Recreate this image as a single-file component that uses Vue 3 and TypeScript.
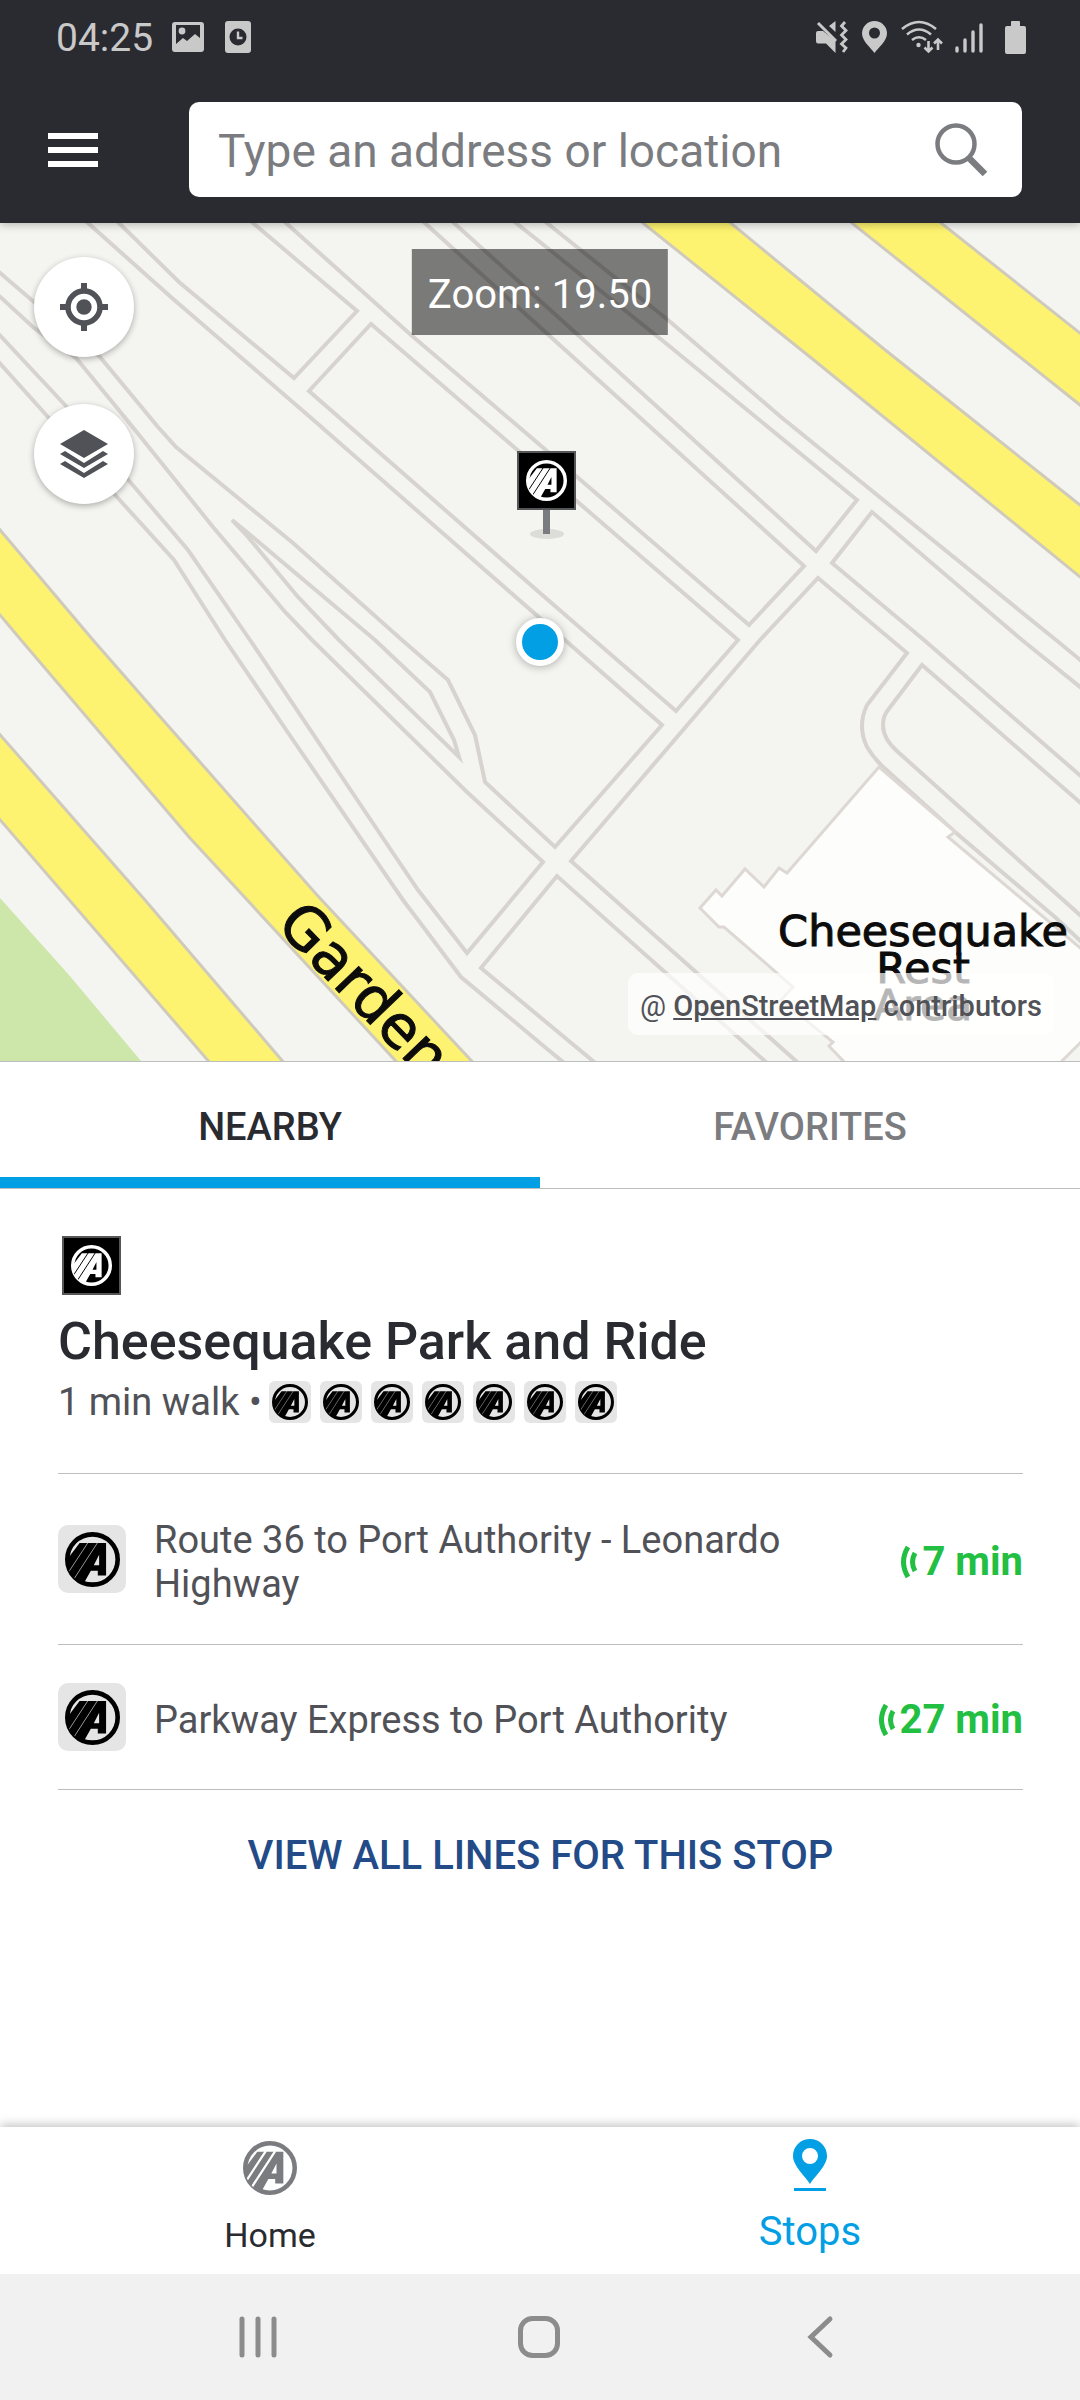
<script setup lang="ts">
import { ref } from 'vue'

interface Departure {
  line: string
  wait: string
}

const query = ref<string>('')
const activeTab = ref<'nearby' | 'favorites'>('nearby')
const zoomLevel = 19.5
const lineCount = 7

const departures: Departure[] = [
  { line: 'Route 36 to Port Authority - Leonardo Highway', wait: '7 min' },
  { line: 'Parkway Express to Port Authority', wait: '27 min' },
]

// Land parcels between the car park lanes, in map units.
const parcels: string[] = [
  '-8,215 78,215 88,223 172,298 310,417 662,725 555,847 485,782 475,735 448,680 402,640 293,543 176,447 158,427 100,357 34,302 -8,266',
  '110,215 119,223 179,282 294,378 357,311 253,223 244,215',
  '371,324 738,640 676,711 540,593 309,391',
  '277,215 286,223 411,335 540,445 749,625 804,566 416,215',
  '445,215 454,223 578,335 816,551 857,500 668,345 540,242 506,215',
  '872,512 832,563 924,640 1090,784 1090,695 1022,640',
  '537,215 547,223 668,320 781,417 1056,640 1090,668 1090,215',
  '557,876 481,968 605,1071 776,1071',
  '-5,292 34,328 76,358 127,420 213,527 286,613 312,640 468,793 543,862 467,953 418,890 362,807 250,640 188,550 131,483 65,405 -5,330',
  '-5,358 48,417 117,497 174,560 225,640 293,740 403,900 461,977 540,1043 574,1071 -5,1071',
  '232,520 248,533 375,640 430,692 454,740 459,757 339,640 298,597 248,537',
]
</script>

<template>
  <div class="app">
    <svg class="defs" aria-hidden="true">
      <symbol id="logo" viewBox="-83 -83 166 166">
        <clipPath id="logo-clip"><circle r="78" /></clipPath>
        <circle r="76" fill="none" stroke="currentColor" stroke-width="14" />
        <g clip-path="url(#logo-clip)">
          <path
            fill="currentColor"
            fill-rule="evenodd"
            d="M-39-50H41V48H16V34H-5L-32 82H-90V18ZM20-14L4 17H20Z"
          />
          <path class="logo-gap" fill="none" d="M-13-52L-76 44M16-52L-58 62" />
        </g>
      </symbol>
    </svg>

    <header class="top">
      <div class="status">
        <div class="status-side">
          <time>04:25</time>
          <svg width="32" height="32" viewBox="0 0 32 32" fill="currentColor">
            <path
              fill-rule="evenodd"
              d="M3 1H29Q32 1 32 4V28Q32 31 29 31H3Q0 31 0 28V4Q0 1 3 1ZM4 4V23L11 17L15 20L23 13L28 17V4Z"
            />
            <circle cx="10" cy="10" r="3.4" />
          </svg>
          <svg class="alarm" width="26" height="32" viewBox="0 0 26 32">
            <rect width="26" height="32" rx="3" fill="currentColor" />
            <circle cx="13" cy="16" r="8.5" fill="#2a2b30" />
            <path d="M13 10.500V17H17.500" fill="none" stroke="currentColor" stroke-width="2.400" />
          </svg>
        </div>
        <div class="status-side signals">
          <svg width="32" height="32" viewBox="0 0 32 32" fill="currentColor">
            <path d="M2 10H7L19.500 20V32L10 22.500H2Q0 22.500 0 20V12Q0 10 2 10ZM13 5L19.500 0V11Z" />
            <path d="M2 2L20 20" stroke="currentColor" stroke-width="3" />
            <path
              d="M29 1L25.500 5L30 9.500L25.500 14L30 18.500L25.500 23L30 27L27 31"
              fill="none"
              stroke="currentColor"
              stroke-width="2.800"
            />
          </svg>
          <svg width="25" height="32" viewBox="0 0 25 32" fill="currentColor">
            <path
              fill-rule="evenodd"
              d="M12.500 0C19.500 0 25 5.500 25 12.500C25 20 16 27 12.500 32C9 27 0 20 0 12.500C0 5.500 5.500 0 12.500 0ZM12.500 6.500A5.500 5.500 0 1 0 12.500 17.500A5.500 5.500 0 1 0 12.500 6.500Z"
            />
          </svg>
          <svg width="40" height="32" viewBox="0 0 40 32" fill="none" stroke="currentColor" stroke-width="2.600">
            <path d="M1 8Q18-6 35 8M6 13.500Q18 3.500 30 13.500M11 19Q18 13.500 25 19" />
            <circle cx="17.500" cy="24" r="2.200" fill="currentColor" stroke="none" />
            <path d="M27.500 20V30M23.500 26.500L27.500 30.500L31.500 26.500M37 29V19M33 22.500L37 18.500L41 22.500" />
          </svg>
          <svg width="28" height="32" viewBox="0 0 28 32" stroke="currentColor" stroke-width="3.400" stroke-linecap="round">
            <path d="M2 27V30M10 19V30M18 11V30M26 4V30" />
          </svg>
          <svg class="battery" width="21" height="33" viewBox="0 0 21 33" fill="currentColor">
            <path d="M7 0H14Q15 0 15 1V5H19Q21 5 21 7V31Q21 33 19 33H2Q0 33 0 31V7Q0 5 2 5H6V1Q6 0 7 0Z" />
          </svg>
        </div>
      </div>
      <div class="appbar">
        <button class="menu" type="button" aria-label="Menu">
          <svg width="50" height="34" viewBox="0 0 50 34" fill="#fff">
            <path d="M0 0H50V6H0ZM0 14H50V20H0ZM0 28H50V34H0Z" />
          </svg>
        </button>
        <label class="search">
          <input v-model="query" type="text" placeholder="Type an address or location" aria-label="Search" />
          <svg width="54" height="54" viewBox="0 0 54 54" fill="none" stroke="#7b7c80">
            <circle cx="21" cy="21" r="18.500" stroke-width="4.500" />
            <path d="M34 35L50 51" stroke-width="6.500" />
          </svg>
        </label>
      </div>
    </header>

    <section class="map" aria-label="Map">
      <svg class="map-canvas" viewBox="0 223 1080 838" preserveAspectRatio="xMidYMid slice">
        <rect y="223" width="1080" height="838" fill="#f4f5f0" />
        <g fill="none" stroke="#d7d3cf" stroke-width="4">
          <polygon v-for="shape in parcels" :key="shape" :points="shape" />
          <path
            d="M808 1071L796 1061L571 861L760 640L818 578L907 653L867 705Q857 726 867 747Q873 757 881 765L955 832L1056 918L1090 950"
          />
          <path d="M1090 924L898 752Q883 739 883 725Q883 716 888 710L922 665L1090 811" />
        </g>
        <polygon
          points="879,767 787,873 779,868 764,887 745,869 722,896 716,890 700,908 719,927 724,927 793,987 781,1000 833,1042 829,1046 848,1066 1057,1066 1085,1038 1085,952 948,837 955,832"
          fill="#fdfdfb"
          stroke="#ddd8d3"
          stroke-width="3"
        />
        <g fill="#fef370" stroke="#cfcabb" stroke-width="3">
          <polygon points="633,215 643,223 815,361 1090,585 1090,513 884,349 721,215" />
          <polygon points="842,215 852,223 1090,413 1090,341 931,215" />
          <polygon points="-5,524 93,640 163,720 317,895 481,1071 405,1071 189,837 21,640 -5,609" />
          <polygon points="-5,729 145,900 291,1071 217,1071 -5,814" />
        </g>
        <polygon points="0,898 69,975 141,1061 0,1061" fill="#cde7ab" />
        <g class="map-label">
          <text transform="translate(275 926) rotate(46)" font-size="59">Garden</text>
          <g text-anchor="middle" font-size="43">
            <text x="923" y="946">Cheesequake</text>
            <text x="923" y="983">Rest</text>
            <text x="923" y="1020">Area</text>
          </g>
        </g>
        <ellipse cx="547" cy="534" rx="17" ry="5" fill="#dcdcd8" />
        <rect x="543" y="508" width="7" height="26" fill="#7b7c80" />
        <rect x="518" y="452" width="57" height="57" fill="#000" stroke="#555658" stroke-width="2" />
        <use class="logo-white" href="#logo" x="526" y="460" width="41" height="41" />
        <circle cx="540" cy="642" r="21" class="me" />
      </svg>

      <div class="map-buttons">
        <button type="button" aria-label="My location">
          <svg width="48" height="48" viewBox="-24 -24 48 48" fill="#515257">
            <circle r="7.700" />
            <circle r="16" fill="none" stroke="#515257" stroke-width="5.500" />
            <path d="M-3-24H3V-17H-3ZM-3 17H3V24H-3ZM-24-3H-17V3H-24ZM17-3H24V3H17Z" />
          </svg>
        </button>
        <button type="button" aria-label="Layers">
          <svg width="48" height="48" viewBox="-24 -24 48 48" fill="#515257">
            <path d="M0-24L24-10L0 4L-24-10ZM-24 0L-19-3L0 9L19-3L24 0L0 14ZM-24 10L-19 7L0 19L19 7L24 10L0 24Z" />
          </svg>
        </button>
      </div>
      <output class="zoom">Zoom: {{ zoomLevel.toFixed(2) }}</output>
      <p class="credit"><span>@</span> <a href="#osm">OpenStreetMap</a> contributors</p>
    </section>

    <div class="tabs" role="tablist">
      <button
        type="button"
        role="tab"
        :aria-selected="activeTab === 'nearby'"
        :class="{ active: activeTab === 'nearby' }"
        @click="activeTab = 'nearby'"
      >
        NEARBY
      </button>
      <button
        type="button"
        role="tab"
        :aria-selected="activeTab === 'favorites'"
        :class="{ active: activeTab === 'favorites' }"
        @click="activeTab = 'favorites'"
      >
        FAVORITES
      </button>
    </div>

    <main class="stop">
      <svg class="sign" width="59" height="59" viewBox="0 0 59 59">
        <rect x="1" y="1" width="57" height="57" fill="#000" stroke="#555658" stroke-width="2" />
        <use class="logo-white" href="#logo" x="9" y="9" width="41" height="41" />
      </svg>
      <h1>Cheesequake Park and Ride</h1>
      <div class="walk">
        <span>1 min walk •</span>
        <span class="chips">
          <span v-for="n in lineCount" :key="n" class="chip"><svg><use href="#logo" /></svg></span>
        </span>
      </div>

      <ul>
        <li v-for="item in departures" :key="item.line">
          <span class="badge"><svg><use href="#logo" /></svg></span>
          <span class="line">{{ item.line }}</span>
          <span class="wait">
            <svg width="16" height="32" viewBox="0 0 16 32" fill="none" stroke="currentColor" stroke-width="5">
              <path d="M7 1Q-2 16 7 31M14 7Q9 16 14 25" />
            </svg>
            {{ item.wait }}
          </span>
        </li>
      </ul>
      <button class="all" type="button">VIEW ALL LINES FOR THIS STOP</button>
    </main>

    <nav class="bottom">
      <a class="home" href="#home">
        <svg width="54" height="54" viewBox="0 0 54 54"><use href="#logo" width="54" height="54" /></svg>
        <span>Home</span>
      </a>
      <a class="stops" href="#stops">
        <svg width="54" height="54" viewBox="0 0 54 54" fill="currentColor">
          <path
            fill-rule="evenodd"
            d="M27-2C36.500-2 44 5.500 44 15C44 25 31 36 27 43C23 36 10 25 10 15C10 5.500 17.500-2 27-2ZM27 7A8 8 0 1 0 27 23A8 8 0 1 0 27 7Z"
          />
          <path d="M11 47H43V50H11Z" />
        </svg>
        <span>Stops</span>
      </a>
    </nav>

    <div class="system">
      <button type="button" aria-label="Recent apps">
        <svg width="42" height="42" viewBox="0 0 42 42"><path d="M5 3V39M21 3V39M37 3V39" /></svg>
      </button>
      <button type="button" aria-label="Home screen">
        <svg width="42" height="42" viewBox="0 0 42 42"><rect x="2.500" y="2.500" width="37" height="37" rx="12" /></svg>
      </button>
      <button type="button" aria-label="Back">
        <svg width="42" height="42" viewBox="0 0 42 42"><path d="M31 3L12 21L31 39" /></svg>
      </button>
    </div>
  </div>
</template>

<style>
body {
  background: #fff;
}
</style>

<style scoped>
.app {
  display: flex;
  flex-direction: column;
  min-height: 100vh;
  font-family: Roboto, 'Liberation Sans', sans-serif;
  color: #2a2b30;
}
.app svg {
  display: block;
  flex: none;
  overflow: visible;
}
.app .defs {
  position: absolute;
  width: 0;
  height: 0;
}
button {
  border: 0;
  padding: 0;
  background: none;
  font: inherit;
  color: inherit;
}
.logo-gap {
  stroke: var(--gap, #e5e5e5);
  stroke-width: var(--gap-width, 2);
}
.logo-white {
  color: #fff;
  --gap: #000;
  --gap-width: 4;
}

.top {
  position: relative;
  z-index: 1;
  background: #2a2b30;
  box-shadow: 0 2px 8px rgba(0, 0, 0, 0.25);
}
.status {
  display: flex;
  justify-content: space-between;
  align-items: center;
  height: 76px;
  padding: 0 54px 2px 56px;
  box-sizing: border-box;
  color: #c9c9c9;
}
.status-side {
  display: flex;
  align-items: center;
  gap: 19px;
  font-size: 39px;
}
.status time {
  padding-top: 2px;
}
.signals {
  gap: 14px;
}
.alarm {
  margin-left: 2px;
}
.battery {
  margin-left: 8px;
}
.appbar {
  display: flex;
  align-items: center;
  gap: 91px;
  height: 147px;
  padding: 0 58px 0 48px;
}
.search {
  display: flex;
  flex: 1;
  align-items: center;
  height: 95px;
  padding: 0 33px 0 29px;
  box-sizing: border-box;
  border-radius: 10px;
  background: #fff;
}
.search input {
  flex: 1;
  min-width: 0;
  border: 0;
  padding: 2px 0 0;
  outline: 0;
  background: none;
  font: inherit;
  font-size: 46px;
  color: #2a2b30;
}
.search input::placeholder {
  color: #7b7c80;
  opacity: 1;
}

.map {
  position: relative;
  aspect-ratio: 1080 / 838;
  border-bottom: 1px solid #bdbebf;
}
.app .map-canvas {
  width: 100%;
  height: 100%;
  overflow: hidden;
}
.map-label {
  font-family: 'DejaVu Sans', sans-serif;
  fill: #0c0c0c;
  stroke: #0c0c0c;
  stroke-width: 1;
}
.me {
  fill: #039fe4;
  stroke: #fff;
  stroke-width: 6;
  filter: drop-shadow(0 1px 4px rgba(0, 0, 0, 0.3));
}
.map-buttons {
  position: absolute;
  top: 34px;
  left: 34px;
  display: grid;
  gap: 47px;
}
.map-buttons button {
  display: grid;
  place-items: center;
  width: 100px;
  height: 100px;
  border-radius: 50%;
  background: #fff;
  box-shadow: 0 2px 6px rgba(0, 0, 0, 0.3);
}
.zoom {
  position: absolute;
  top: 26px;
  left: 50%;
  transform: translateX(-50%);
  padding: 6px 16px 0;
  background: rgba(0, 0, 0, 0.5);
  color: #fff;
  font-size: 40px;
  line-height: 80px;
  white-space: nowrap;
}
.credit {
  position: absolute;
  right: 26px;
  bottom: 26px;
  margin: 0;
  padding: 4px 12px 0;
  border-radius: 10px;
  background: rgba(255, 255, 255, 0.7);
  color: #515257;
  font-size: 29px;
  font-weight: 500;
  line-height: 58px;
}
.credit span {
  font-weight: 400;
}
.credit a {
  color: inherit;
}

.tabs {
  display: flex;
  border-bottom: 1px solid #bdbebf;
}
.tabs button {
  flex: 1;
  height: 126px;
  padding-top: 4px;
  border-top: 11px solid transparent;
  border-bottom: 11px solid transparent;
  color: #7b7c80;
  font-size: 38px;
  font-weight: 500;
}
.tabs .active {
  border-bottom-color: #039fe4;
  color: #2a2b30;
}

.stop {
  flex: 1;
  padding: 47px 57px 0 58px;
}
.sign {
  margin-left: 4px;
}
h1 {
  margin: 15px 0 7px;
  font-size: 52px;
  font-weight: 500;
  line-height: 64px;
}
.walk {
  display: flex;
  align-items: center;
  gap: 7px;
  color: #515257;
  font-size: 38px;
  line-height: 42px;
}
.chips {
  display: flex;
  gap: 9px;
}
.chip,
.badge {
  display: grid;
  flex: none;
  place-items: center;
  width: 42px;
  height: 42px;
  border-radius: 6px;
  background: #e5e5e5;
  color: #000;
}
.chip svg {
  width: 36px;
  height: 36px;
}
.badge {
  width: 68px;
  height: 68px;
  border-radius: 10px;
}
.badge svg {
  width: 55px;
  height: 55px;
}
ul {
  margin: 50px 0 0;
  padding: 0;
  border-top: 1px solid #bdbebf;
  list-style: none;
}
li {
  display: flex;
  align-items: center;
  padding: 38px 0;
  border-bottom: 1px solid #bdbebf;
  font-size: 38px;
  line-height: 44px;
}
.line {
  flex: 1;
  padding: 6px 60px 0 28px;
  color: #515257;
}
.wait {
  display: flex;
  align-items: center;
  gap: 5px;
  padding-top: 6px;
  color: #22bf42;
  font-size: 40px;
  font-weight: 700;
  white-space: nowrap;
}
.all {
  display: block;
  width: 100%;
  height: 130px;
  color: #234b88;
  font-size: 40px;
  font-weight: 500;
}

.bottom {
  display: flex;
  height: 147px;
  background: #fff;
  box-shadow: 0 -2px 10px rgba(0, 0, 0, 0.25);
}
.bottom a {
  display: flex;
  flex: 1;
  flex-direction: column;
  align-items: center;
  gap: 11px;
  padding-top: 14px;
  text-decoration: none;
  line-height: 52px;
}
.bottom .home {
  gap: 14px;
  color: #7b7c80;
  font-size: 34px;
  --gap: #fff;
  --gap-width: 7;
}
.home span {
  color: #2a2b30;
}
.stops {
  color: #039fe4;
  font-size: 40px;
}
.system {
  display: flex;
  justify-content: center;
  gap: 239px;
  padding: 42px 3px 42px 0;
  background: #f1f1f1;
}
.system svg {
  fill: none;
  stroke: #8c8c8c;
  stroke-width: 5;
  stroke-linecap: round;
}
</style>
